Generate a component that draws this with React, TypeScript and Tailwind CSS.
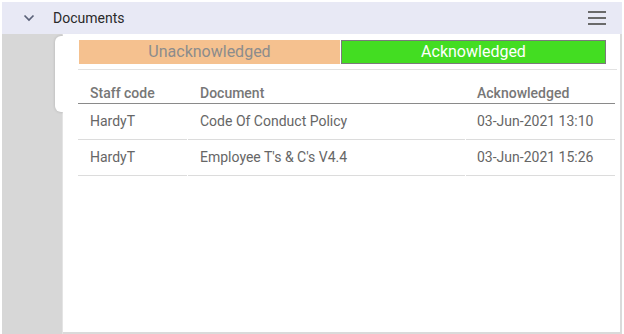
import React from "react";

const rows = [
  { staff: "HardyT", doc: "Code Of Conduct Policy", ack: "03-Jun-2021 13:10" },
  { staff: "HardyT", doc: "Employee T's & C's V4.4", ack: "03-Jun-2021 15:26" },
];

export default function App() {
  return (
    <div
      className="w-[624px] h-[334px] bg-white pl-[2px] pt-[2px] overflow-hidden"
      style={{ fontFamily: "Roboto, 'Liberation Sans', sans-serif" }}
    >
      <div className="w-[620px] h-[332px] flex flex-col">
        {/* Header */}
        <div className="h-[32px] bg-[#e8e9f5] flex items-center shrink-0">
          <div className="w-[51px] flex justify-center pl-[1px]">
            <svg width="12" height="8" viewBox="0 0 12 8" className="ml-[1px]">
              <path d="M1.5 1.5 L6 6 L10.5 1.5" fill="none" stroke="#5a6178" strokeWidth="1.7" />
            </svg>
          </div>
          <span className="text-[14px] text-[#2a2a2a] leading-none">Documents</span>
          <div className="ml-auto mr-[16px] flex flex-col gap-[4px]">
            <div className="w-[18px] h-[2px] bg-[#6a6a6a]" />
            <div className="w-[18px] h-[2px] bg-[#6a6a6a]" />
            <div className="w-[18px] h-[2px] bg-[#6a6a6a]" />
          </div>
        </div>
        {/* Body */}
        <div className="relative flex flex-1 min-h-0">
          <div className="w-[61px] bg-[#d7d7d7] shrink-0 border-r border-[#e4e4e4]" />
          <div className="absolute left-[53px] top-[2px] w-[30px] h-[76px] bg-white rounded-[6px] shadow-[0_0_3px_rgba(0,0,0,0.18)]" />
          <div className="relative z-10 flex-1 bg-white border-r-2 border-b-2 border-[#dadada] pl-[15px] pr-[3px] pt-[6px]">
            <div className="flex ml-[1px] mr-[11px] h-[24px]">
              <div className="w-[261px] bg-[#f5c18f] flex items-center justify-center text-[16px] text-[#8c8c8c]">
                Unacknowledged
              </div>
              <div className="flex-1 ml-[1px] bg-[#43dd22] border border-[#7a7a7a] flex items-center justify-center text-[16px] text-white">
                Acknowledged
              </div>
            </div>
            <div className="mt-[5px] h-[1px] bg-[#e2e2e2]" />
            <div className="grid grid-cols-[109px_277px_149px] gap-x-[1px]">
              <div className="h-[34px] flex items-end pb-[2px] pl-[12px] text-[14px] leading-[16px] font-medium text-[#777] border-b border-[#8a8a8a]">
                Staff code
              </div>
              <div className="h-[34px] flex items-end pb-[2px] text-[14px] leading-[16px] font-medium text-[#777] border-b border-[#8a8a8a] -mx-[1px] px-[13px]">
                Document
              </div>
              <div className="h-[34px] flex items-end pb-[2px] pl-[11px] text-[14px] leading-[16px] font-medium text-[#777] border-b border-[#8a8a8a]">
                Acknowledged
              </div>
              {rows.map((r, i) => (
                <React.Fragment key={i}>
                  <div className="h-[36px] flex items-center pl-[12px] text-[14px] text-[#666] border-b border-[#dcdcdc]">
                    {r.staff}
                  </div>
                  <div className="h-[36px] flex items-center pl-[12px] text-[14px] text-[#666] border-b border-[#dcdcdc]">
                    {r.doc}
                  </div>
                  <div className="h-[36px] flex items-center pl-[11px] text-[14px] text-[#666] border-b border-[#dcdcdc]">
                    {r.ack}
                  </div>
                </React.Fragment>
              ))}
            </div>
          </div>
        </div>
      </div>
    </div>
  );
}
